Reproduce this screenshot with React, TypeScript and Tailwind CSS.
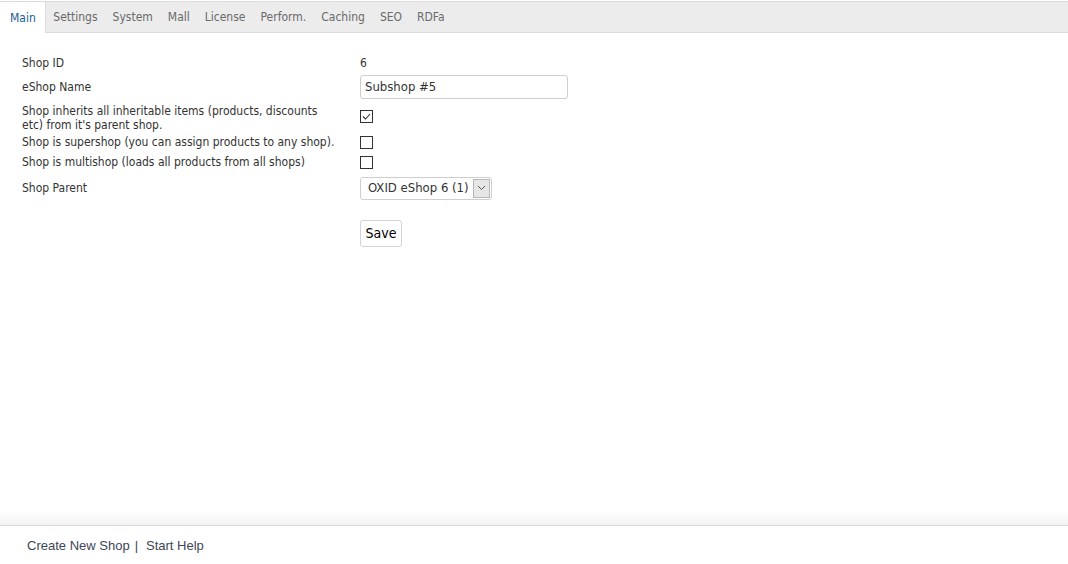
import React from "react";

function Box({ checked }: { checked?: boolean }) {
  return (
    <div className="w-[13px] h-[13px] border border-[#333] bg-white flex items-center justify-center">
      {checked && (
        <svg width="11" height="11" viewBox="0 0 11 11">
          <path d="M2 5.5 L4.5 8 L9 3" fill="none" stroke="#333" strokeWidth="1.1" />
        </svg>
      )}
    </div>
  );
}

const tahoma = { fontFamily: '"DejaVu Sans Condensed", "Liberation Sans", sans-serif' };

export default function App() {
  const tabs = ["Settings", "System", "Mall", "License", "Perform.", "Caching", "SEO", "RDFa"];
  return (
    <div className="h-screen flex flex-col bg-white text-[#333]" style={{ fontFamily: '"Liberation Sans", Arial, sans-serif' }}>
      <div className="mt-px h-[32px] bg-[#ececec] border-t border-b border-[#dcdcdc] flex items-stretch text-[12px]" style={tahoma}>
        <div className="bg-white pl-[10px] pr-[9px] flex items-center border-r border-[#dcdcdc] -mb-px text-[#1b5c93]">Main</div>
        {tabs.map((t) => (
          <div key={t} className="px-[7.5px] flex items-center text-[#6a6a6a]">{t}</div>
        ))}
      </div>
      <div className="flex-1 pl-[22px] pt-[21px] text-[12px]" style={tahoma}>
        <div className="grid grid-cols-[338px_1fr]">
          <div className="h-[18px] flex items-center">Shop ID</div>
          <div className="h-[18px] flex items-center">6</div>

          <div className="h-[26px] mt-[2px] flex items-center">eShop Name</div>
          <div className="h-[26px] mt-[2px] flex items-center">
            <div className="w-[208px] h-[24px] border border-[#cfcfcf] rounded-[3px] px-[4px] flex items-center text-[13px]">Subshop #5</div>
          </div>

          <div className="mt-[4px] leading-[14px] h-[29px]">Shop inherits all inheritable items (products, discounts<br />etc) from it's parent shop.</div>
          <div className="mt-[4px] h-[29px] pt-[6px]"><Box checked /></div>

          <div className="h-[16px] mt-[1px] flex items-center">Shop is supershop (you can assign products to any shop).</div>
          <div className="h-[16px] mt-[1px] flex items-center"><Box /></div>

          <div className="h-[16px] mt-[4px] flex items-center">Shop is multishop (loads all products from all shops)</div>
          <div className="h-[16px] mt-[4px] flex items-center"><Box /></div>

          <div className="h-[24px] mt-[6px] flex items-center">Shop Parent</div>
          <div className="h-[24px] mt-[6px] flex items-center">
            <div className="w-[132px] h-[23px] border border-[#cfcfcf] rounded-[3px] flex items-stretch text-[13px]">
              <div className="flex-1 flex items-center pl-[7px]">OXID eShop 6 (1)</div>
              <div className="w-[17px] my-[1px] mr-[1px] bg-[#e6e6e6] border border-[#b8b8b8] flex items-center justify-center">
                <svg width="9" height="6" viewBox="0 0 9 6"><path d="M1 1 L4.5 4.5 L8 1" fill="none" stroke="#555" strokeWidth="1" /></svg>
              </div>
            </div>
          </div>

          <div className="h-[27px] mt-[20px]"></div>
          <div className="h-[27px] mt-[20px]">
            <div className="w-[42px] h-[27px] border border-[#d4d4d4] rounded-[3px] bg-white flex items-center justify-center text-[14px] text-black">Save</div>
          </div>
        </div>
      </div>
      <div className="h-[14px] bg-gradient-to-b from-white to-[#f3f3f3]"></div>
      <div className="h-[39px] border-t border-[#dadada] pl-[27px] pt-[1px] flex items-center text-[13px] text-[#3d4658]">
        <span>Create New Shop</span>
        <span className="ml-[5px]">|</span>
        <span className="ml-[8px]">Start Help</span>
      </div>
    </div>
  );
}
